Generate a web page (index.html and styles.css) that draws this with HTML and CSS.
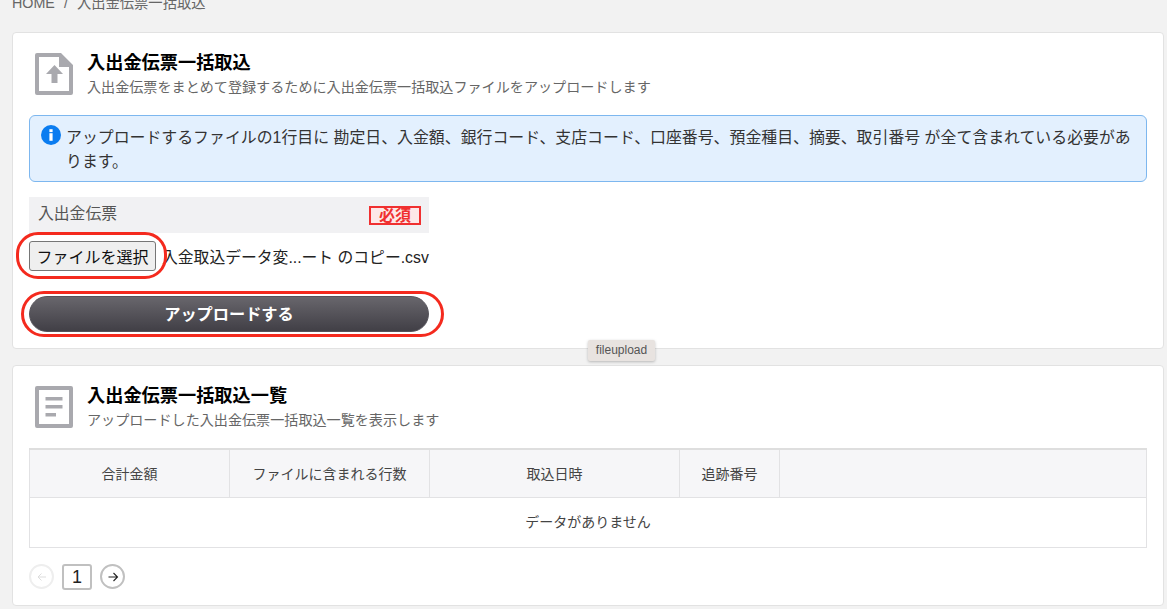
FILE: index.html
```html
<!DOCTYPE html>
<html lang="ja">
<head>
<meta charset="utf-8">
<title>入出金伝票一括取込</title>
<link rel="stylesheet" href="styles.css">
</head>
<body>
<nav class="crumbs"><span>HOME</span><span>/</span><span>入出金伝票一括取込</span></nav>
<section class="card card-upload">
  <header class="head">
    <svg class="head-icon" viewBox="0 0 38 42"><path fill="#a9a9ae" fill-rule="evenodd" d="M2 0H26L38 12V40a2 2 0 0 1-2 2H2a2 2 0 0 1-2-2V2a2 2 0 0 1 2-2ZM4 4V38H34V14H24V4Z"/><path fill="#a9a9ae" d="M19.500 12 28 21H22.500V30H16.500V21H11Z"/></svg>
    <div class="head-text">
      <h1>入出金伝票一括取込</h1>
      <p>入出金伝票をまとめて登録するために入出金伝票一括取込ファイルをアップロードします</p>
    </div>
  </header>
  <div class="alert">
    <svg class="alert-icon" viewBox="0 0 20 20"><circle cx="10" cy="10" r="10" fill="#0a7cf0"/><rect x="8.4" y="8.2" width="3.2" height="7.6" fill="#fff"/><rect x="8.4" y="4.2" width="3.2" height="2.9" fill="#fff"/></svg>
    <p>アップロードするファイルの1行目に 勘定日、入金額、銀行コード、支店コード、口座番号、預金種目、摘要、取引番号 が全て含まれている必要があります。</p>
  </div>
  <div class="field">
    <div class="field-label"><span>入出金伝票</span><em>必須</em></div>
    <div class="file-row"><button class="file-btn" type="button">ファイルを選択</button><span class="file-name">入金取込データ変...ート のコピー.csv</span></div>
    <button class="submit" type="button">アップロードする</button>
  </div>
  <div class="ring ring-file"></div>
  <div class="ring ring-submit"></div>
</section>
<div class="tip">fileupload</div>
<section class="card card-list">
  <header class="head">
    <svg class="head-icon" viewBox="0 0 38 42"><path fill="#a9a9ae" fill-rule="evenodd" d="M2 0H36a2 2 0 0 1 2 2V40a2 2 0 0 1-2 2H2a2 2 0 0 1-2-2V2a2 2 0 0 1 2-2ZM4 4V38H34V4Z"/><rect x="10.500" y="11" width="17" height="3.5" fill="#a9a9ae"/><rect x="10.500" y="19" width="17" height="3.5" fill="#a9a9ae"/><rect x="10.500" y="27" width="10.500" height="3.5" fill="#a9a9ae"/></svg>
    <div class="head-text">
      <h1>入出金伝票一括取込一覧</h1>
      <p>アップロードした入出金伝票一括取込一覧を表示します</p>
    </div>
  </header>
  <table class="data">
    <colgroup><col class="c200"><col class="c200"><col class="c250"><col class="c100"><col></colgroup>
    <thead><tr><th>合計金額</th><th>ファイルに含まれる行数</th><th>取込日時</th><th>追跡番号</th><th></th></tr></thead>
    <tbody><tr><td colspan="5">データがありません</td></tr></tbody>
  </table>
  <div class="pager">
    <span class="round off"><svg viewBox="0 0 12 12"><path d="M10 6H2M5.500 2.500 2 6l3.500 3.500" fill="none" stroke="currentColor" stroke-width="1"/></svg></span>
    <span class="page">1</span>
    <span class="round"><svg viewBox="0 0 12 12"><path d="M1.500 6H10.500M6.500 2 10.500 6l-4 4" fill="none" stroke="currentColor" stroke-width="1.100"/></svg></span>
  </div>
</section>
</body>
</html>
```

FILE: styles.css
```css
* { box-sizing: border-box; }
html, body { margin: 0; height: 609px; overflow: hidden; }
body {
  position: relative;
  background: #f2f2f2;
  color: #333;
  font-family: "Liberation Sans", "Noto Sans CJK JP", sans-serif;
  padding: 0 3px 0 12px;
}
.crumbs {
  display: flex;
  gap: 9px;
  height: 32px;
  margin-top: -6px;
  font-size: 14.3px;
  line-height: 18px;
  color: #666;
}
.card {
  position: relative;
  background: #fff;
  border: 1px solid #e2e2e2;
  border-radius: 4px;
  padding: 0 16px;
}
.card-upload { height: 317px; margin-top: 6px; }
.card-list { height: 241px; margin-top: 16px; }
.head { display: flex; gap: 14px; padding: 20px 0 0 6px; height: 82px; }
.head-icon { width: 38px; height: 42px; flex: none; }
.head-text h1 { margin: 0; font-size: 18.2px; line-height: 21px; font-weight: 700; color: #000; }
.head-text p { margin: 4px 0 0; font-size: 14.1px; line-height: 18px; color: #666; }
.alert {
  display: flex;
  gap: 5px;
  height: 67px;
  padding: 10px 10px 0 11px;
  background: #e3f0fe;
  border: 1px solid #7db7ef;
  border-radius: 6px;
}
.alert-icon { width: 20px; height: 20px; flex: none; margin-top: -1px; }
.alert p { margin: 0; font-size: 15.9px; line-height: 24px; color: #333; }
.field { width: 400px; margin-top: 15px; }
.field-label {
  display: flex;
  justify-content: space-between;
  height: 36px;
  padding: 0 8px 0 9px;
  background: #f1f1f3;
  font-size: 15.8px;
  line-height: 34px;
  color: #555;
}
.field-label em {
  align-self: center;
  width: 52px;
  height: 19px;
  font-style: normal;
  font-weight: 700;
  font-size: 16px;
  line-height: 15px;
  text-align: center;
  color: #f03030;
  background: #fde8e8;
  border: 2px solid #f03030;
}
.file-row { display: flex; align-items: center; gap: 6px; margin-top: 8px; height: 30px; }
.file-btn {
  width: 127px;
  height: 30px;
  padding: 0;
  font: inherit;
  font-size: 16px;
  color: #111;
  background: #efefef;
  border: 1px solid #767676;
  border-radius: 3px;
}
.file-name { font-size: 15.8px; color: #222; white-space: nowrap; }
.submit {
  display: block;
  width: 400px;
  height: 36px;
  margin-top: 25px;
  padding: 0 0 2px;
  font: inherit;
  font-size: 16.2px;
  font-weight: 700;
  color: #fff;
  background: linear-gradient(#68666c, #413f46);
  border: 1px solid #55535a;
  border-radius: 18px;
}
.ring { position: absolute; border: 3px solid #f42a1e; }
.ring-file { left: 3px; top: 199px; width: 151px; height: 47px; border-radius: 22px; }
.ring-submit { left: 8px; top: 258px; width: 423px; height: 46px; border-radius: 23px; }
.tip {
  position: absolute;
  left: 588px;
  top: 340px;
  z-index: 2;
  width: 67px;
  height: 21px;
  font-size: 12px;
  line-height: 20px;
  text-align: center;
  color: #555;
  background: #e8e3e0;
  border-radius: 2px;
  box-shadow: 0 1px 3px rgba(0,0,0,.25);
}
.data {
  width: 1118px;
  table-layout: fixed;
  border-collapse: collapse;
  font-size: 14px;
  color: #444;
}
.c200 { width: 200px; }
.c250 { width: 250px; }
.c100 { width: 100px; }
.data th, .data td { border: 1px solid #e2e2e4; text-align: center; font-weight: 400; }
.data thead tr { border-top: 2px solid #dedede; }
.data th { height: 48px; background: #f6f6f8; }
.data td { height: 50px; padding-bottom: 3px; }
.pager { display: flex; align-items: center; gap: 8px; margin-top: 16px; }
.round {
  display: flex;
  align-items: center;
  justify-content: center;
  width: 25px;
  height: 25px;
  color: #222;
  border: 2px solid #c0c0c0;
  border-radius: 50%;
}
.round svg { width: 12px; height: 12px; }
.round.off { color: #ddd; border-color: #eee; }
.page {
  width: 30px;
  height: 26px;
  font-size: 18px;
  line-height: 23px;
  text-align: center;
  color: #222;
  border: 2px solid #c0c0c0;
  border-radius: 3px;
}
```
